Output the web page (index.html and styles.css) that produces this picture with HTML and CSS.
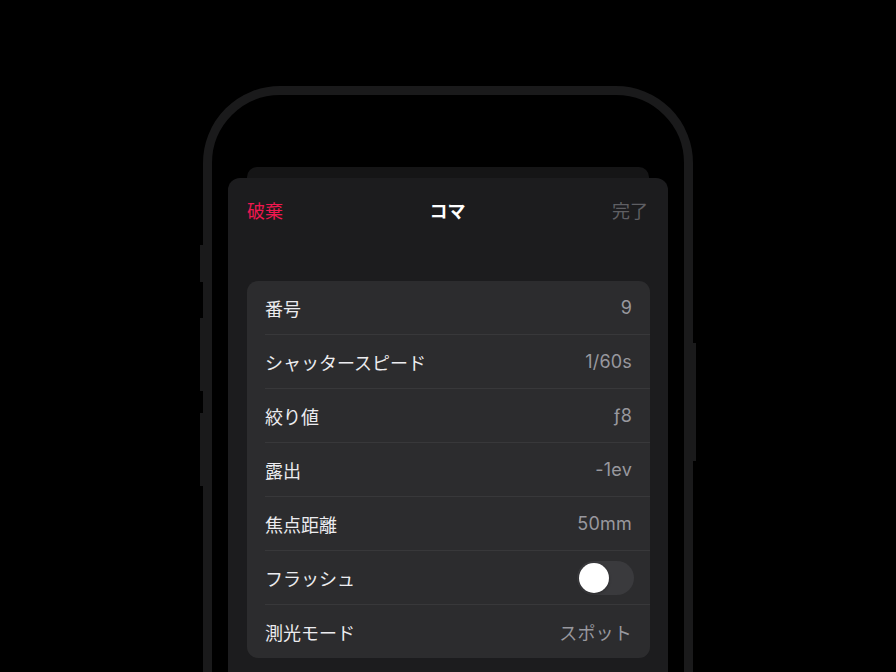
FILE: index.html
```html
<!DOCTYPE html>
<html lang="ja">
<head>
<meta charset="utf-8">
<link rel="stylesheet" href="styles.css">
</head>
<body>
<div class="device">
  <span class="hw hw-l1"></span>
  <span class="hw hw-l2"></span>
  <span class="hw hw-l3"></span>
  <span class="hw hw-r1"></span>
  <div class="phone">
    <div class="back-sheet"></div>
    <div class="sheet">
      <div class="header">
        <span class="btn-discard">破棄</span>
        <span class="title">コマ</span>
        <span class="btn-done">完了</span>
      </div>
      <div class="card">
        <div class="row"><span class="label">番号</span><span class="value">9</span></div>
        <div class="row"><span class="label">シャッタースピード</span><span class="value">1/60s</span></div>
        <div class="row"><span class="label">絞り値</span><span class="value">ƒ8</span></div>
        <div class="row"><span class="label">露出</span><span class="value">-1ev</span></div>
        <div class="row"><span class="label">焦点距離</span><span class="value">50mm</span></div>
        <div class="row"><span class="label">フラッシュ</span><span class="toggle"><span class="knob"></span></span></div>
        <div class="row"><span class="label">測光モード</span><span class="value">スポット</span></div>
      </div>
    </div>
  </div>
</div>
</body>
</html>
```
FILE: styles.css
```css
html, body {
  margin: 0;
  padding: 0;
  background: #000;
  height: 672px;
  overflow: hidden;
  font-family: Inter, "Noto Sans CJK JP", sans-serif;
}

.device {
  position: relative;
  width: 490px;
  margin: 86px auto 0;
}

.phone {
  box-sizing: border-box;
  width: 490px;
  height: 760px;
  border: 9px solid #1a1a1b;
  border-radius: 77px;
  background: #000;
  padding-top: 72px;
  overflow: hidden;
}

.hw {
  position: absolute;
  width: 3px;
  background: #1a1a1b;
}
.hw-l1 { left: -3px; top: 159px; height: 37px; }
.hw-l2 { left: -3px; top: 232px; height: 73px; }
.hw-l3 { left: -3px; top: 327px; height: 73px; }
.hw-r1 { right: -3px; top: 257px; height: 118px; }

.back-sheet {
  height: 11px;
  margin: 0 35px;
  background: #151516;
  border-radius: 10px 10px 0 0;
}

.sheet {
  margin: 0 16px;
  height: 600px;
  background: #1c1c1e;
  border-radius: 12px 12px 0 0;
}

.header {
  height: 63px;
  padding: 0 20px 0 19px;
  display: grid;
  grid-template-columns: 1fr auto 1fr;
  align-items: center;
  font-size: 18px;
  font-family: "Noto Sans CJK JP", sans-serif;
}

.btn-discard {
  color: #f0174f;
  justify-self: start;
}

.title {
  color: #fff;
  font-weight: 700;
  justify-self: center;
}

.btn-done {
  color: #5f5f63;
  justify-self: end;
}

.card {
  margin: 40px 18px 0 19px;
  background: #2c2c2e;
  border-radius: 11px;
  padding-left: 18px;
}

.row {
  height: 53px;
  display: flex;
  align-items: center;
  justify-content: space-between;
  padding-right: 18px;
  font-size: 18px;
  border-top: 1px solid #38383a;
}
.row:first-child {
  border-top: none;
}

.label {
  color: #ececf0;
}

.value {
  color: #98989e;
  letter-spacing: 0.2px;
}

.toggle {
  box-sizing: border-box;
  width: 57px;
  height: 34px;
  border-radius: 17px;
  background: #3a3a3d;
  margin-right: -2px;
  padding: 2px;
  display: flex;
  align-items: center;
}

.knob {
  width: 30px;
  height: 30px;
  border-radius: 50%;
  background: #fff;
  box-shadow: 0 1px 3px rgba(0,0,0,0.3);
}
```
